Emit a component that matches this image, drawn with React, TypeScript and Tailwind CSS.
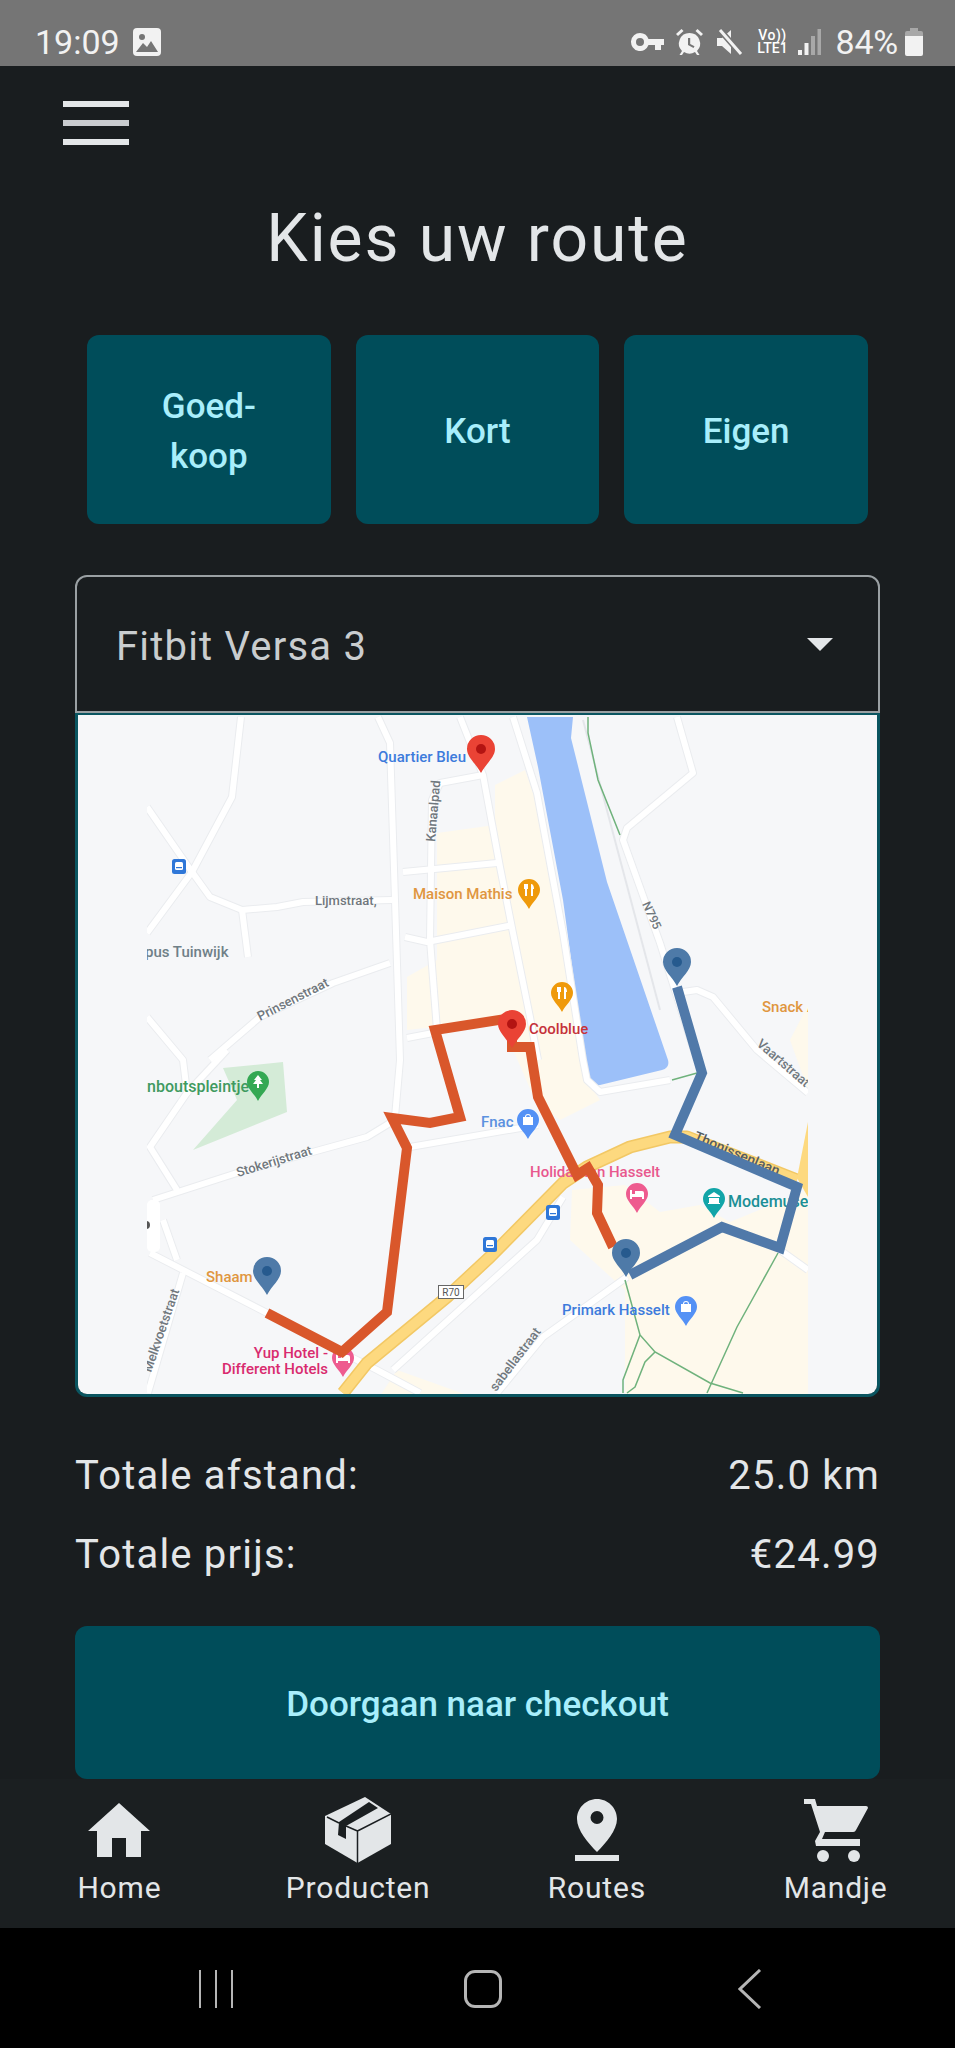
const ROADS = [
  "241,717 232,797 192,872 147,933",
  "147,807 192,872 210,897 242,910 277,907 303,902 392,900",
  "242,910 248,957",
  "378,717 390,743 395,900 400,1060 395,1117",
  "460,717 483,775 500,867 513,933 530,1017 538,1060",
  "483,775 440,783 432,800 430,940 437,1030",
  "403,872 497,863",
  "405,937 427,942 513,925",
  "407,1038 433,1033",
  "513,717 537,793 563,933 583,1060 587,1080 600,1092 670,1080",
  "677,717 693,773 627,828 623,840 660,943 697,1060",
  "683,992 697,990 713,997 757,1050 808,1093",
  "153,1200 240,1172 367,1137 390,1123",
  "210,1060 260,1017 333,983 390,963",
  "147,1017 183,1060 187,1093 150,1147 177,1190",
  "227,1050 187,1093",
  "150,1253 267,1313 337,1350 377,1370 420,1393",
  "177,1260 163,1220",
  "183,1273 148,1393",
  "393,1370 537,1240 563,1197",
  "627,1277 543,1337 497,1393",
  "780,1250 808,1270",
  "410,1147 538,1125",
];

const GREEN_PATHS = [
  "588,717 588,733 598,780 620,835",
  "672,1080 697,1073",
  "625,1280 640,1335 655,1352 710,1383 743,1393",
  "640,1335 623,1380 623,1393",
  "655,1352 645,1362 635,1387 627,1393",
  "778,1253 737,1327 707,1393",
];

const LABELS: [string, number, number, string, number, number?][] = [
  ["Quartier Bleu", 378, 762, "#3d7bdc", 15],
  ["Maison Mathis", 413, 899, "#e0963f", 15],
  ["Lijmstraat,", 315, 905, "#70777d", 13],
  ["pus Tuinwijk", 145, 957, "#6f8088", 15],
  ["Coolblue", 529, 1034, "#c5323a", 15],
  ["Snack A", 762, 1012, "#e0963f", 15],
  ["Fnac", 481, 1127, "#5b91e0", 15],
  ["Holiday Inn Hasselt", 530, 1177, "#e8588e", 15],
  ["Modemuseum", 728, 1207, "#1b8f96", 16],
  ["Primark Hasselt", 562, 1315, "#3d7bdc", 15],
  ["Shaam", 206, 1282, "#e0963f", 15],
  ["nboutspleintje", 147, 1092, "#3f9a60", 16],
  ["73", 792, 1405, "#1b8f96", 14],
  ["Kanaalpad", 435, 842, "#70777d", 13, -85],
  ["Prinsenstraat", 260, 1021, "#70777d", 13, -27],
  ["N795", 642, 904, "#70777d", 12, 65],
  ["Vaartstraat", 756, 1045, "#70777d", 13, 41],
  ["Stokerijstraat", 238, 1177, "#70777d", 13, -17],
  ["Melkvoetstraat", 151, 1373, "#70777d", 13, -71],
  ["sabellastraat", 496, 1392, "#70777d", 13, -53],
  ["Thonissenlaan", 693, 1140, "#555b60", 14, 23],
];

const SMALL_PINS: [number, number, string, string][] = [
  [529, 890, "#ef9a0b", "food"],
  [562, 993, "#ef9a0b", "food"],
  [258, 1082, "#34a853", "tree"],
  [528, 1120, "#5491f5", "bag"],
  [637, 1194, "#ee5b8f", "bed"],
  [714, 1199, "#12a5a8", "museum"],
  [686, 1307, "#5491f5", "bag"],
  [343, 1358, "#ee5b8f", "bed"],
];

function pinPath(x: number, y: number, r: number) {
  const t = r * 1.72;
  return `M${x} ${y + t} C${x - r * 0.3} ${y + r * 1.1} ${x - r} ${y + r * 0.6} ${x - r} ${y} A${r} ${r} 0 1 1 ${x + r} ${y} C${x + r} ${y + r * 0.6} ${x + r * 0.3} ${y + r * 1.1} ${x} ${y + t} Z`;
}

function Pin({ x, y, color, dot }: { x: number; y: number; color: string; dot: string }) {
  return (
    <g>
      <path d={pinPath(x, y, 14)} fill={color} />
      <circle cx={x} cy={y} r={5} fill={dot} />
    </g>
  );
}

function PlacePin({ x, y, color, kind }: { x: number; y: number; color: string; kind: string }) {
  return (
    <g>
      <path d={pinPath(x, y, 11)} fill={color} />
      <g transform={`translate(${x} ${y})`} fill="#fff">
        {kind === "food" && <path d="M-5 -6h4v5h-1v7h-2v-7h-1ZM2 -6c2 0 3 2 3 5h-1v7H2Z" />}
        {kind === "tree" && <path d="M0 -7l4 5H2l3 4H1v4h-2V2h-4l3-4h-2Z" />}
        {kind === "bag" && <path fillRule="evenodd" d="M-5 -3h2a3 3 0 0 1 6 0h2v8h-10Zm3 0h4a2 2 0 0 0-4 0Z" />}
        {kind === "bed" && <path d="M-7 -4h2v4h3v-3h7a2 2 0 0 1 2 2v6h-2v-2h-10v2h-2Z" />}
        {kind === "museum" && <path d="M0 -7l6 4v1h-12v-1ZM-5 -1h10v5h1v1h-12v-1h1Z" />}
      </g>
    </g>
  );
}

function BusIcon({ x, y }: { x: number; y: number }) {
  return (
    <g>
      <rect x={x} y={y} width="14" height="15" rx="2.5" fill="#2f77d8" />
      <rect x={x + 3} y={y + 3} width="8" height="8" rx="1.5" fill="#fff" />
      <rect x={x + 4} y={y + 8} width="6" height="1.2" fill="#2f77d8" />
    </g>
  );
}

function RouteMap() {
  return (
    <svg viewBox="78 715 799 679" className="block h-full w-full">
      <rect x="78" y="715" width="799" height="679" fill="#f6f7f9" />
      <defs>
        <clipPath id="mapclip">
          <rect x="147" y="715" width="661" height="681" />
        </clipPath>
      </defs>
      <g clipPath="url(#mapclip)" fontFamily="Roboto, sans-serif">
        <path d="M495 785 L525 770 L548 835 L590 1085 L600 1100 L560 1120 L535 1100 L500 1020 L407 1030 L407 977 L437 960 L437 833 L495 825 Z" fill="#fef9ec" />
        <path d="M570 1240 L572 1190 L625 1185 L660 1212 L700 1205 L730 1222 L808 1190 L808 1396 L625 1396 L625 1290 Z" fill="#fef9ec" />
        <path d="M397 1370 L470 1396 L380 1396 Z" fill="#fef9ec" />
        <path d="M790 1040 L808 1005 L808 1090 Z" fill="#fef9ec" />
        <path d="M223 1068 L283 1062 L287 1112 L193 1150 L237 1100 Z" fill="#d4ebd7" />
        <path d="M527 717 L573 717 L571 738 L607 882 L668 1060 Q670 1068 662 1070 L600 1085 Q592 1086 590 1080 L585 1060 L563 900 L538 767 Z" fill="#9cc0f9" />
        {ROADS.map((pts) => (
          <polyline key={pts + "c"} points={pts} fill="none" stroke="#eaecef" strokeWidth="8" strokeLinejoin="round" />
        ))}
        {ROADS.map((pts) => (
          <polyline key={pts} points={pts} fill="none" stroke="#ffffff" strokeWidth="6" strokeLinejoin="round" />
        ))}
        <polyline points="583,720 660,1010" fill="none" stroke="#e4e6ea" strokeWidth="2" />
        {GREEN_PATHS.map((pts) => (
          <polyline key={pts} points={pts} fill="none" stroke="#6fb27c" strokeWidth="1.5" />
        ))}
        <polyline points="343,1393 367,1363 447,1297 490,1257 563,1183 587,1167 630,1147 670,1137 687,1137 797,1180" fill="none" stroke="#f2c865" strokeWidth="13" strokeLinejoin="round" />
        <polyline points="343,1393 367,1363 447,1297 490,1257 563,1183 587,1167 630,1147 670,1137 687,1137 797,1180" fill="none" stroke="#fdd97f" strokeWidth="10" strokeLinejoin="round" />
        <path d="M808 1122 L797 1178 L808 1197 Z" fill="#fdd97f" />
        <rect x="147" y="1200" width="13" height="52" rx="5" fill="#ffffff" />
        <circle cx="146" cy="1225" r="4" fill="#555" />
        <rect x="438.5" y="1285.5" width="25" height="13" fill="#fff" stroke="#666" />
        <text x="451" y="1296" fontSize="10" textAnchor="middle" fill="#555">R70</text>
        <BusIcon x={172} y={859} />
        <BusIcon x={546} y={1205} />
        <BusIcon x={483} y={1237} />
        {LABELS.map(([t, x, y, c, s, rot]) => (
          <text key={t} x={x} y={y} fill={c} fontSize={s} fontWeight={500} transform={rot ? `rotate(${rot} ${x} ${y})` : undefined}>
            {t}
          </text>
        ))}
        <text x="328" y="1358" fill="#d92b6f" fontSize="15" fontWeight={500} textAnchor="end">Yup Hotel -</text>
        <text x="328" y="1374" fill="#d92b6f" fontSize="15" fontWeight={500} textAnchor="end">Different Hotels</text>
        {SMALL_PINS.map(([x, y, c, kind]) => (
          <PlacePin key={`${x}-${y}`} x={x} y={y} color={c} kind={kind} />
        ))}
        <polyline points="267,1313 342,1352 387,1312 407,1148 392,1118 430,1123 460,1117 435,1030 512,1018 512,1047 530,1047 538,1097 577,1175 588,1168 598,1185 597,1213 613,1247" fill="none" stroke="#d9572b" strokeWidth="10" strokeLinejoin="miter" />
        <polyline points="677,987 702,1073 675,1135 797,1187 780,1248 722,1227 630,1275" fill="none" stroke="#5079a9" strokeWidth="10" strokeLinejoin="miter" />
        <Pin x={481} y={749} color="#ea4335" dot="#b31412" />
        <Pin x={512} y={1024} color="#ea4335" dot="#b31412" />
        <Pin x={677} y={962} color="#4e7aa8" dot="#265a8e" />
        <Pin x={267} y={1271} color="#4e7aa8" dot="#265a8e" />
        <Pin x={626} y={1253} color="#4e7aa8" dot="#265a8e" />
      </g>
    </svg>
  );
}

function StatusIcons() {
  return (
    <div className="flex items-center text-[#f2f2f2]">
      <svg width="33" height="18" viewBox="0 0 33 18" fill="currentColor">
        <path fillRule="evenodd" d="M9 0a9 9 0 0 1 8.5 6H33v6h-3v5h-6v-5h-6.500A9 9 0 1 1 9 0Zm0 5a4 4 0 1 0 0 8 4 4 0 0 0 0-8Z" />
      </svg>
      <svg width="27" height="27" viewBox="0 0 27 27" className="ml-[12px]" fill="currentColor">
        <path fillRule="evenodd" d="M13.500 4a10.500 10.500 0 0 1 7.500 17.900l2.500 4.100h-2.500l-2-3a10.500 10.500 0 0 1-11 0l-2 3H3.500L6 21.900A10.500 10.500 0 0 1 13.500 4Zm-1.500 5v7l5.500 3 1-1.700-4.300-2.400V9ZM5.500 0l2 2L2 7 0 5Zm16 0L27 5l-2 2-5.500-5Z" />
      </svg>
      <svg width="26" height="26" viewBox="0 0 26 26" className="ml-[14px]">
        <path d="M0 9h5l9-8v24l-9-8H0Z" fill="#f2f2f2" />
        <path d="M3 1l21 24" stroke="#757575" strokeWidth="6" />
        <path d="M3 1l21 24" stroke="#f2f2f2" strokeWidth="3" />
      </svg>
      <div className="ml-[12px] flex w-[34px] flex-col items-center text-[14px] leading-[13px] font-medium text-white">
        <span className="tracking-[0.5px]">Vo))</span>
        <span>LTE1</span>
      </div>
      <svg width="23" height="26" viewBox="0 0 23 26" className="ml-[9px]">
        <rect x="0" y="21" width="4" height="5" fill="#f2f2f2" />
        <rect x="6.500" y="14" width="4" height="12" fill="#f2f2f2" />
        <rect x="13" y="7" width="4" height="19" fill="#a8a8a8" />
        <rect x="19.500" y="0" width="3.500" height="26" fill="#a8a8a8" />
      </svg>
      <span className="ml-[14px] text-[34px] leading-none tracking-[-0.2px]">84%</span>
      <svg width="18" height="28" viewBox="0 0 18 28" className="ml-[7px]">
        <path d="M5 0h8v3h3a2 2 0 0 1 2 2v3H0V5a2 2 0 0 1 2-2h3Z" fill="#a8a8a8" />
        <path d="M0 8h18v18a2 2 0 0 1-2 2H2a2 2 0 0 1-2-2Z" fill="#f2f2f2" />
      </svg>
    </div>
  );
}

function NavItem({ label, children }: { label: string; children: React.ReactNode }) {
  return (
    <div className="flex flex-1 flex-col items-center">
      <div className="flex h-[68px] items-center justify-center text-[#e3e6e8]">{children}</div>
      <span className="mt-[6px] text-[30px] leading-[36px] tracking-[0.8px] text-[#e3e6e8]">{label}</span>
    </div>
  );
}

export default function App() {
  return (
    <div className="flex h-[2048px] w-[955px] flex-col bg-[#191d1f] font-['Roboto',sans-serif]">
      {/* status bar */}
      <div className="flex h-[66px] shrink-0 items-end justify-between bg-[#757575] pr-[32px] pb-[7px] pl-[35px]">
        <div className="flex items-center text-[#f2f2f2]">
          <span className="text-[34px] leading-none">19:09</span>
          <svg width="28" height="28" viewBox="0 0 28 28" className="ml-[13px]">
            <rect width="28" height="28" rx="4" fill="#f2f2f2" />
            <circle cx="9" cy="9" r="3" fill="#757575" />
            <path d="M3 24l7-9 4 4 4-6 7 11Z" fill="#757575" />
          </svg>
        </div>
        <StatusIcons />
      </div>

      {/* app bar */}
      <div className="flex h-[114px] shrink-0 flex-col justify-center gap-[13px] pl-[63px]">
        <div className="h-[6px] w-[66px] bg-[#e3e6e8]" />
        <div className="h-[6px] w-[66px] bg-[#c9cccf]" />
        <div className="h-[6px] w-[66px] bg-[#e3e6e8]" />
      </div>

      <main className="flex flex-1 flex-col px-[75px]">
        <h1 className="mt-[21px] text-center text-[66px] leading-[76px] font-normal tracking-[1.9px] text-[#e3e6e8]">Kies uw route</h1>

        <div className="mt-[58px] grid grid-cols-3 gap-x-[25px] px-[12px]">
          {["Goed-\nkoop", "Kort", "Eigen"].map((t) => (
            <div key={t} className="flex h-[189px] items-center justify-center rounded-[12px] bg-[#004d5a] pt-[5px] text-center text-[35px] leading-[50px] font-medium whitespace-pre-line text-[#a8eefb]">
              {t}
            </div>
          ))}
        </div>

        <div className="mt-[51px] flex h-[138px] items-center justify-between rounded-t-[12px] border-2 border-[#9aa0a3] pr-[45px] pl-[39px]">
          <span className="mt-[5px] text-[40px] tracking-[1.2px] text-[#c9cdcf]">Fitbit Versa 3</span>
          <svg width="26" height="13" viewBox="0 0 26 13">
            <path d="M0 0h26L13 13Z" fill="#e3e6e8" />
          </svg>
        </div>

        <div className="h-[684px] overflow-hidden rounded-b-[12px] border-[3px] border-t-2 border-[#0a5560]">
          <RouteMap />
        </div>

        <div className="mt-[51px] flex justify-between text-[40px] leading-[56px] tracking-[1.2px] text-[#e3e6e8]">
          <span>Totale afstand:</span>
          <span>25.0 km</span>
        </div>
        <div className="mt-[23px] flex justify-between text-[40px] leading-[56px] tracking-[1.2px] text-[#e3e6e8]">
          <span>Totale prijs:</span>
          <span>€24.99</span>
        </div>

        <div className="mt-[43px] flex h-[153px] items-center justify-center rounded-[12px] bg-[#004d5a] pt-[5px] text-[35px] font-medium text-[#a8eefb]">
          Doorgaan naar checkout
        </div>
      </main>

      {/* bottom nav */}
      <nav className="flex h-[149px] shrink-0 items-start bg-[#1b1f21] pt-[17px]">
        <NavItem label="Home">
          <svg width="62" height="54" viewBox="0 0 62 54" fill="currentColor">
            <path d="M31 0l31 28h-9v26H38V35H24v19H9V28H0Z" />
          </svg>
        </NavItem>
        <NavItem label="Producten">
          <svg width="66" height="66" viewBox="0 0 66 66">
            <path d="M40 0 L66 17 V47 L32.500 66 L0 47 V19 Z" fill="currentColor" />
            <path d="M44 5 L53 11 L21 29 L21 42 L13 38 L14 25 Z" fill="#1b1f21" />
            <path d="M32.500 34 V66 M32.500 34 L66 17 M2 20 L14 26 M21 29 L32.500 34" stroke="#1b1f21" strokeWidth="1.5" fill="none" />
          </svg>
        </NavItem>
        <NavItem label="Routes">
          <svg width="44" height="62" viewBox="0 0 44 62" fill="currentColor">
            <path fillRule="evenodd" d="M22 0c11 0 20 9 20 20 0 11-11 24-20 33C13 44 2 31 2 20 2 9 11 0 22 0Zm0 12a6.500 6.500 0 1 0 0 13 6.500 6.500 0 0 0 0-13Z" />
            <rect x="0" y="56" width="44" height="6" />
          </svg>
        </NavItem>
        <NavItem label="Mandje">
          <svg width="64" height="63" viewBox="0 0 64 63" fill="currentColor">
            <path d="M0 0 H11 L13 7 H62 a2 2 0 0 1 2 2 L52 31 a3 3 0 0 1-3 2 H21 L18 40 H56 V47 H12 L11 42 L16 33 L7 5 H0 Z" />
            <circle cx="19" cy="57" r="6" />
            <circle cx="50" cy="57" r="6" />
          </svg>
        </NavItem>
      </nav>

      {/* android nav */}
      <div className="flex h-[120px] shrink-0 items-center bg-black pt-[2px] pl-[82px]">
        <div className="flex w-[267px] justify-center gap-[14px]">
          <div className="h-[38px] w-[2px] bg-[#b5b5b5]" />
          <div className="h-[38px] w-[2px] bg-[#b5b5b5]" />
          <div className="h-[38px] w-[2px] bg-[#b5b5b5]" />
        </div>
        <div className="flex w-[267px] justify-center">
          <div className="h-[38px] w-[38px] rounded-[11px] border-[3px] border-[#b5b5b5]" />
        </div>
        <div className="flex w-[267px] justify-center">
          <svg width="24" height="40" viewBox="0 0 24 40" fill="none">
            <path d="M22 1L2 20l20 19" stroke="#b5b5b5" strokeWidth="3" />
          </svg>
        </div>
      </div>
    </div>
  );
}
